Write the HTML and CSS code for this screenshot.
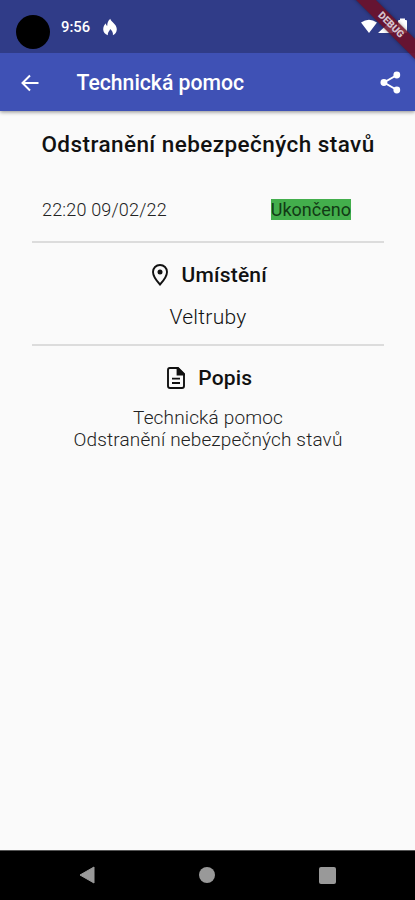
FILE: index.html
```html
<!DOCTYPE html>
<html lang="cs">
<head>
<meta charset="utf-8">
<title>Technická pomoc</title>
<link rel="stylesheet" href="styles.css">
</head>
<body>
<div class="screen">
  <header class="status">
    <span class="camera"></span>
    <span class="clock">9:56</span>
    <svg class="flame" width="16" height="18" viewBox="0 0 16 18"><path d="M8.300 .7C8.800 4 14.800 5.800 14.800 11.200c0 3-1.600 5-3.900 6 .5-2.400-.9-4.500-2.800-6.200-.4 2.200-2.700 3.100-2.200 6.200C3 16.300 1.200 14.200 1.200 11.300c0-2.600 1.300-4.500 2.500-6 .2 1.300.7 2.100 1.500 2.600C5.300 5 6 2.400 8.300.7z" fill="#fff"/></svg>
    <svg class="signals" width="48" height="18" viewBox="0 0 48 18"><path d="M0 4.500Q8 -1 16 4.500L8 15z M32 1v14H17z" fill="#fff"/><path d="M37 3q0-1 1-1h1V.5h5V2h1q1 0 1 1v11q0 1-1 1h-7q-1 0-1-1z" fill="#fff"/></svg>
    <div class="banner"><span>DEBUG</span></div>
  </header>
  <nav class="appbar">
    <svg class="back" width="18" height="18" viewBox="0 0 18 18"><path d="M17.500 9H2M9 1.500L1.500 9 9 16.500" fill="none" stroke="#fff" stroke-width="2"/></svg>
    <h1 class="title">Technická pomoc</h1>
    <svg class="share" width="21" height="23" viewBox="0 0 21 23"><path d="M17 4L4 11.500 17 19" fill="none" stroke="#fff" stroke-width="2"/><g fill="#fff"><circle cx="16.800" cy="4" r="3.400"/><circle cx="3.900" cy="11.500" r="3.400"/><circle cx="16.800" cy="19" r="3.400"/></g></svg>
  </nav>
  <main class="content">
    <h2 class="headline">Odstranění nebezpečných stavů</h2>
    <div class="meta"><span class="date">22:20 09/02/22</span><span class="state">Ukončeno</span></div>
    <section class="block place">
      <h3 class="label"><svg width="16" height="22" viewBox="0 0 16 22"><path d="M8 1C4 1 1 4 1 8c0 5 7 12.500 7 12.500S15 13 15 8c0-4-3-7-7-7z" fill="none" stroke="#111" stroke-width="1.900"/><circle cx="8" cy="8" r="2.500" fill="#111"/></svg><span>Umístění</span></h3>
      <p class="town">Veltruby</p>
    </section>
    <section class="block about">
      <h3 class="label"><svg width="18" height="22" viewBox="0 0 18 22"><path d="M2.800 1H11l6 6v12q0 2-2 2H3q-2 0-2-2V3q0-2 1.800-2z" fill="none" stroke="#111" stroke-width="1.900"/><path d="M10.500 1v6.500H17zM5 11.700h8M5 16h8" fill="#111" stroke="#111" stroke-width="1.800"/></svg><span>Popis</span></h3>
      <p class="desc">Technická pomoc<br>Odstranění nebezpečných stavů</p>
    </section>
  </main>
  <footer class="navbar">
    <svg width="16" height="18" viewBox="0 0 16 18"><path d="M15 1v16L1 9z" fill="#999" stroke="#999" stroke-linejoin="round"/></svg>
    <span class="home"></span>
    <span class="recent"></span>
  </footer>
</div>
</body>
</html>
```
FILE: styles.css
```css
* { box-sizing: border-box; margin: 0; padding: 0; }
body { font-family: Roboto, sans-serif; background: #fafafa; color: #111; }
svg { display: block; flex: none; }
.screen { width: 415px; height: 900px; display: flex; flex-direction: column; overflow: hidden; }
.status { position: relative; z-index: 1; height: 53px; flex: none; background: #303c88; display: flex; align-items: center; padding: 0 7px 0 16px; }
.camera { width: 34px; height: 34px; border-radius: 50%; background: #000; margin-top: 11px; }
.clock { color: #fff; font-size: 14.800px; font-weight: 500; margin-left: 11px; width: 30px; white-space: nowrap; }
.flame { margin-left: 11px; }
.signals { margin-left: auto; margin-right: -1px; }
.banner { position: absolute; left: 331px; top: 18px; width: 120px; height: 14px; background: rgba(112, 14, 36, .86); transform: rotate(45deg); color: #d5c3cf; font-size: 10px; line-height: 14px; font-weight: 900; text-align: center; box-shadow: 0 0 4px rgba(0, 0, 0, .4); }
.appbar { height: 58px; flex: none; background: #3f51b5; display: flex; align-items: center; padding: 1px 14px 0 21px; box-shadow: 0 1px 4px rgba(0, 0, 0, .45); }
.title { color: #fff; font-size: 21.200px; font-weight: 500; margin-left: 37.500px; white-space: nowrap; }
.share { margin-left: auto; }
.content { flex: 1; padding: 19px 31px 0 32px; }
.headline { font-size: 22.500px; line-height: 28px; font-weight: 500; letter-spacing: .44px; text-align: center; white-space: nowrap; }
.meta { display: flex; justify-content: space-between; align-items: flex-start; height: 83px; padding: 41px 33px 0 10px; font-size: 18px; font-weight: 300; }
.date, .state { line-height: 21px; white-space: nowrap; }
.date { letter-spacing: .18px; color: #222; }
.state { background: #43ae4c; color: #123a15; font-weight: 400; }
.block { border-top: 2px solid #dcdcdc; text-align: center; }
.place { height: 103px; }
.label { display: flex; justify-content: center; align-items: center; height: 24px; margin-top: 20px; gap: 13.500px; padding-left: 3px; font-size: 21px; letter-spacing: .2px; font-weight: 500; }
.town { font-size: 21px; line-height: 24px; margin-top: 18px; font-weight: 300; letter-spacing: .25px; }
.desc { font-size: 19px; line-height: 22px; margin-top: 17px; font-weight: 300; letter-spacing: .15px; white-space: nowrap; color: #222; }
.navbar { height: 50px; flex: none; background: #000; border-top: 1px solid #555; display: flex; justify-content: space-between; align-items: center; padding: 0 79px 1px; }
.home { width: 16px; height: 16px; border-radius: 50%; background: #999; }
.recent { width: 17px; height: 17px; border-radius: 2px; background: #999; }
```
